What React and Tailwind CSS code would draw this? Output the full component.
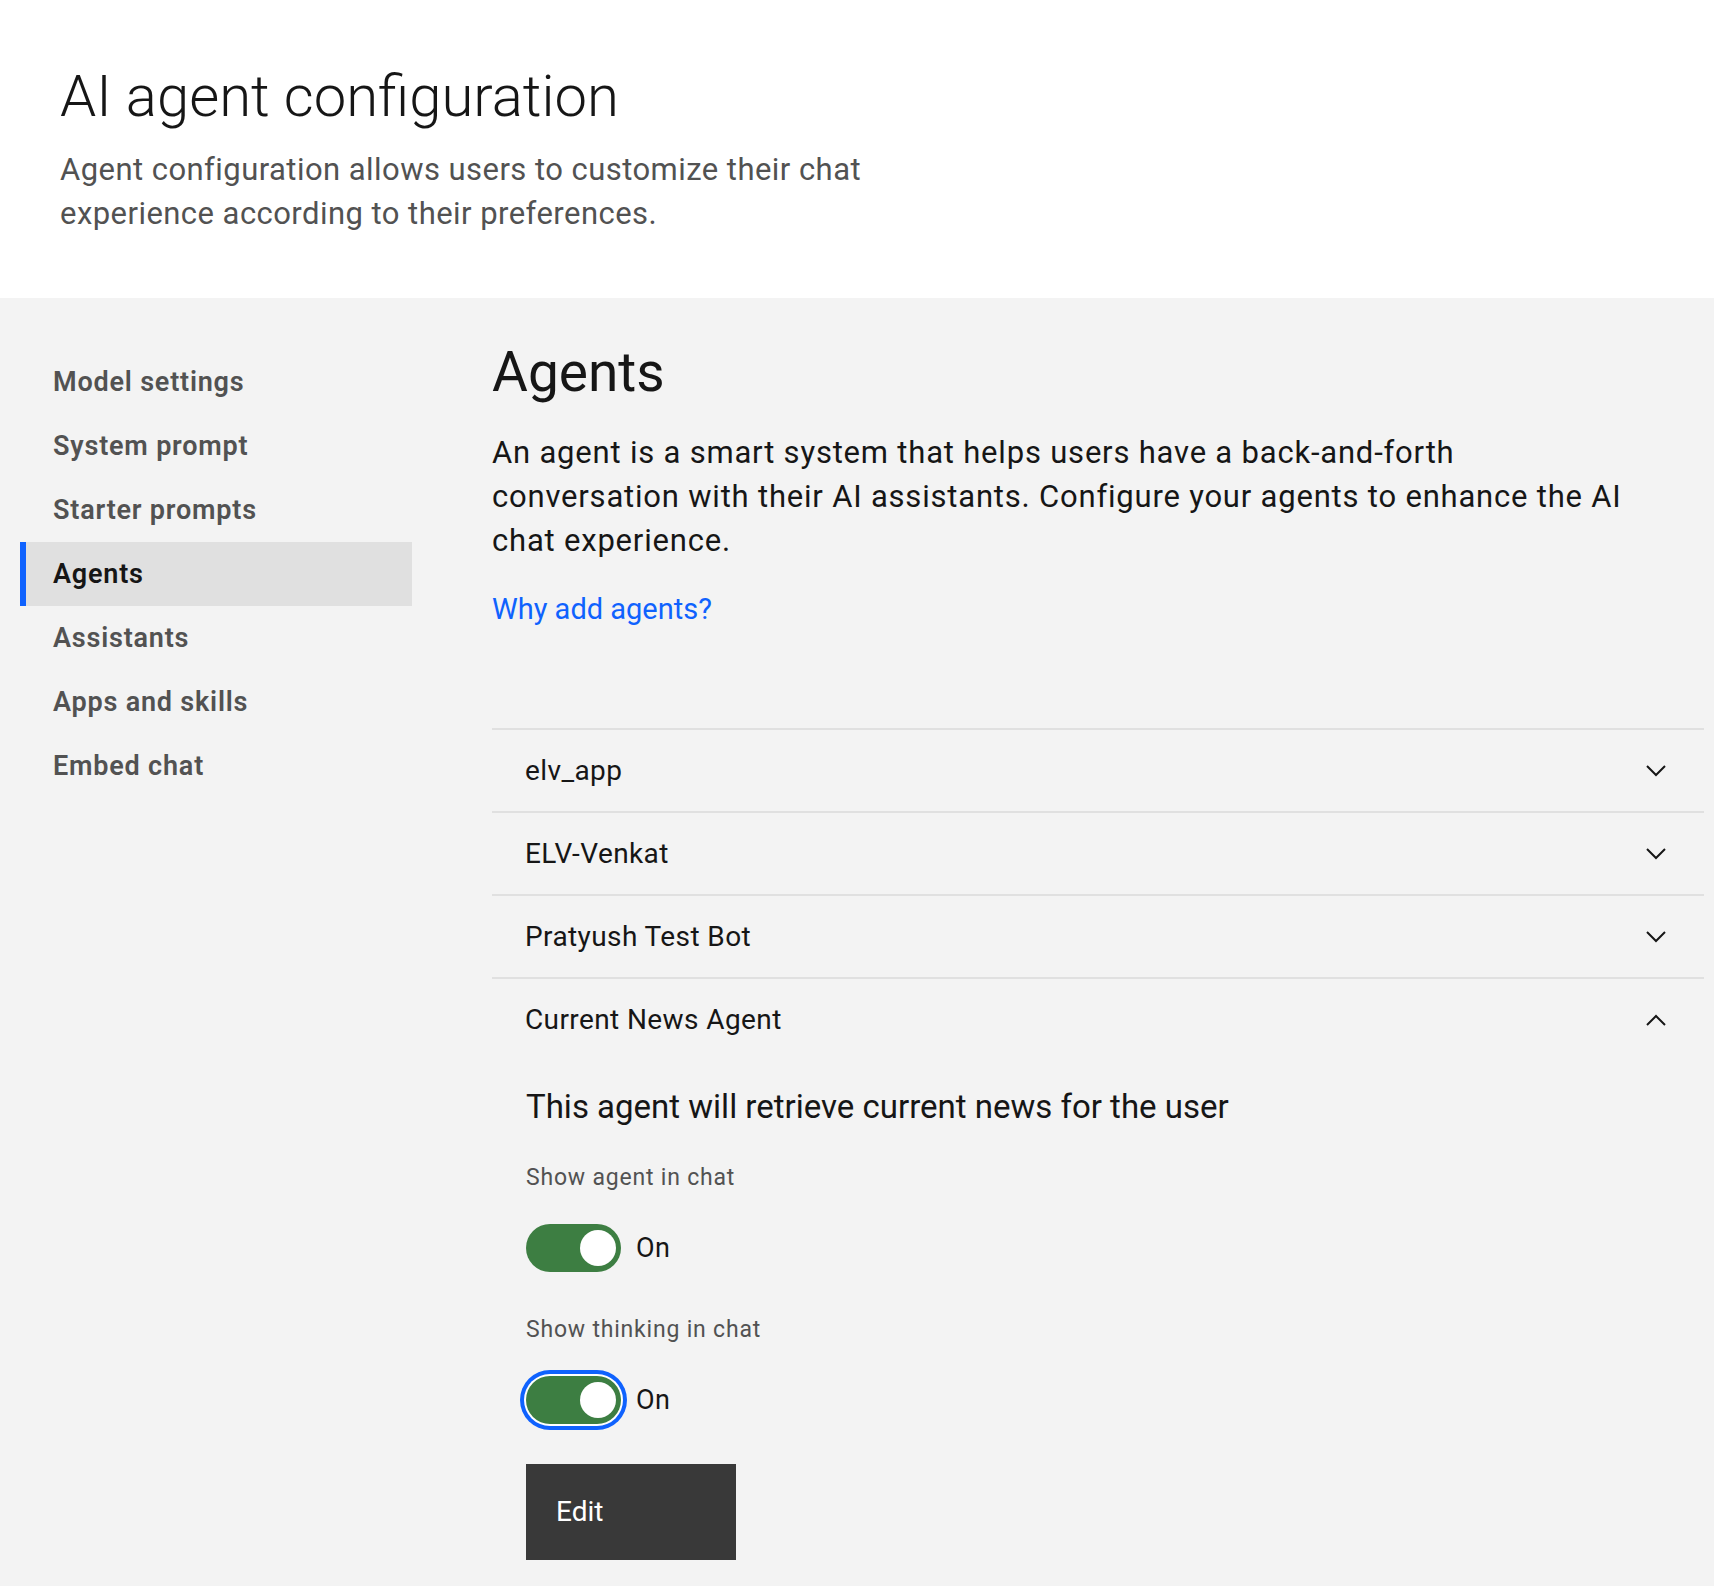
import React, {useState} from 'react';

const navItems = ['Model settings', 'System prompt', 'Starter prompts', 'Agents', 'Assistants', 'Apps and skills', 'Embed chat'];

const agents = [
  {name: 'elv_app', description: ''},
  {name: 'ELV-Venkat', description: ''},
  {name: 'Pratyush Test Bot', description: ''},
  {name: 'Current News Agent', description: 'This agent will retrieve current news for the user'},
];

function Chevron({up}) {
  return (
    <svg width="20" height="12" viewBox="0 0 20 12" fill="none" className="shrink-0">
      <path
        d={up ? 'M1 11 L10 2 L19 11' : 'M1 1 L10 10 L19 1'}
        stroke="#161616"
        strokeWidth="2"
      />
    </svg>
  );
}

function Toggle({label, checked, focused, onChange}) {
  return (
    <div>
      <div className="text-[23px] leading-[28px] tracking-[0.8px] text-[#525252]">{label}</div>
      <div className="flex items-center gap-[15px] mt-[32px]">
        <button
          onClick={onChange}
          className={
            'relative w-[95px] h-[48px] rounded-full flex items-center ' +
            (checked ? 'bg-[#3d7e42] ' : 'bg-[#8d8d8d] ') +
            (focused ? 'ring-[4px] ring-[#0f62fe] ring-offset-2 ring-offset-white' : '')
          }
        >
          <span
            className={
              'absolute top-[6px] w-[36px] h-[36px] rounded-full bg-white ' + (checked ? 'left-[54px]' : 'left-[6px]')
            }
          />
        </button>
        <span className="text-[27px] tracking-[0.4px] text-[#161616]">{checked ? 'On' : 'Off'}</span>
      </div>
    </div>
  );
}

function AgentRow({agent, open, onToggle}) {
  const [showAgent, setShowAgent] = useState(true);
  const [showThinking, setShowThinking] = useState(true);

  return (
    <div className="border-t-2 border-[#e0e0e0]">
      <button onClick={onToggle} className="w-full h-[81px] flex items-center justify-between pl-[33px] pr-[38px]">
        <span className="text-[28px] tracking-[0.4px] text-[#161616]">{agent.name}</span>
        <Chevron up={open} />
      </button>
      {open && (
        <div className="pl-[34px] pb-[26px]">
          <p className="mt-[27px] text-[33px] leading-[40px] text-[#161616]">{agent.description}</p>
          <div className="mt-[37px]">
            <Toggle label="Show agent in chat" checked={showAgent} onChange={() => setShowAgent(!showAgent)} />
          </div>
          <div className="mt-[44px]">
            <Toggle
              label="Show thinking in chat"
              checked={showThinking}
              focused
              onChange={() => setShowThinking(!showThinking)}
            />
          </div>
          <button className="mt-[40px] w-[210px] h-[96px] bg-[#393939] text-white text-[28px] text-left pl-[30px]">
            Edit
          </button>
        </div>
      )}
    </div>
  );
}

export default function App() {
  const [active, setActive] = useState('Agents');
  const [openAgent, setOpenAgent] = useState('Current News Agent');

  return (
    <div className="min-h-screen bg-[#f3f3f3] font-['Roboto',sans-serif]">
      <header className="bg-white h-[298px] pl-[60px] pt-[64px]">
        <h1 className="text-[58px] leading-[64px] font-light text-[#161616]">AI agent configuration</h1>
        <p className="mt-[20px] max-w-[840px] text-[31px] leading-[44px] tracking-[0.45px] text-[#525252]">
          Agent configuration allows users to customize their chat experience according to their preferences.
        </p>
      </header>

      <div className="flex">
        <nav className="w-[392px] ml-[20px] pt-[52px] shrink-0">
          {navItems.map((item) => (
            <button
              key={item}
              onClick={() => setActive(item)}
              className={
                'w-full h-[64px] flex items-center text-left text-[27px] tracking-[0.8px] font-semibold border-l-[6px] pl-[27px] ' +
                (item === active
                  ? 'bg-[#e0e0e0] border-[#0f62fe] text-[#161616]'
                  : 'border-transparent text-[#525252]')
              }
            >
              {item}
            </button>
          ))}
        </nav>

        <main className="ml-[80px] w-[1212px] pt-[42px]">
          <h2 className="text-[55px] leading-[64px] text-[#161616]">Agents</h2>
          <p className="mt-[27px] text-[31px] leading-[44px] tracking-[0.8px] text-[#161616]">
            An agent is a smart system that helps users have a back-and-forth
            <br />
            conversation with their AI assistants. Configure your agents to enhance the AI
            <br />
            chat experience.
          </p>
          <a href="#" className="block mt-[24px] text-[29px] leading-[44px] text-[#0f62fe] w-fit">
            Why add agents?
          </a>

          <div className="mt-[97px]">
            {agents.map((agent) => (
              <AgentRow
                key={agent.name}
                agent={agent}
                open={openAgent === agent.name}
                onToggle={() => setOpenAgent(openAgent === agent.name ? null : agent.name)}
              />
            ))}
          </div>
        </main>
      </div>
    </div>
  );
}
